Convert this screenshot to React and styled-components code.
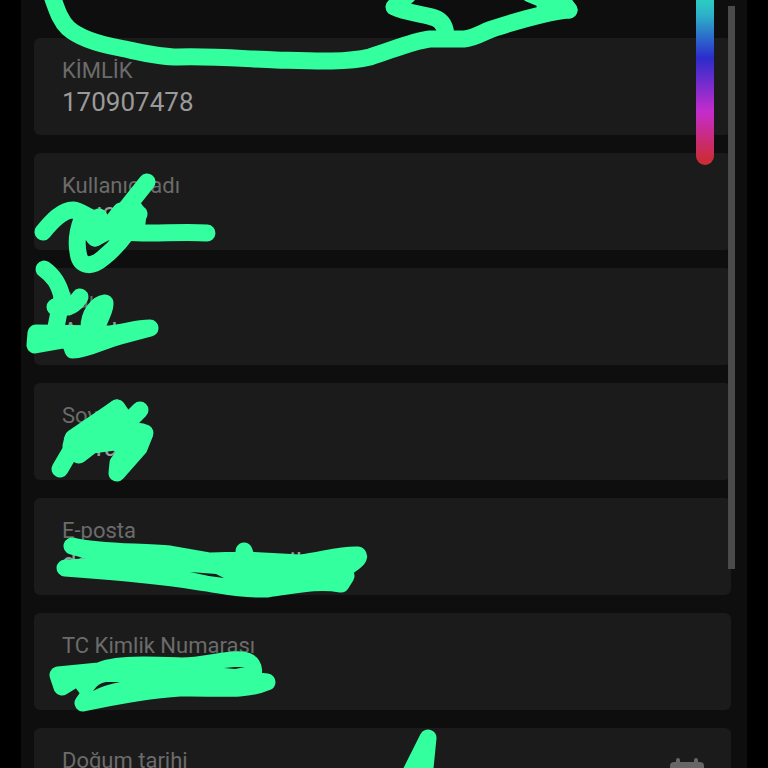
import React from "react";
import styled, { createGlobalStyle } from "styled-components";

const fields = [
  { id: "kimlik", label: "KİMLİK", value: "170907478" },
  { id: "kullanici", label: "Kullanıcı adı", value: "\u00a0\u00a0\u00a0\u00a0d2" },
  { id: "ad", label: "Adı", value: "A\u00a0\u00a0\u00a0\u00a0\u00a0l" },
  { id: "soyad", label: "Soyadı", value: "F\u00a0\u00a0\u00a0ra" },
  {
    id: "eposta",
    label: "E-posta",
    value: "day" + "\u00a0".repeat(16) + "t@" + "\u00a0".repeat(8) + "il",
  },
  { id: "tc", label: "TC Kimlik Numarası", value: "6" },
  { id: "dogum", label: "Doğum tarihi", value: "", date: true },
];

const App = () => {
  return (
    <>
      <GlobalStyle />
      <Screen>
        <Form>
          {fields.map((field) => (
            <Card key={field.id}>
              <CardText>
                <Label htmlFor={field.id}>{field.label}</Label>
                <Value id={field.id} defaultValue={field.value} readOnly />
              </CardText>
              {field.date && (
                <DateButton type="button" aria-label="Doğum tarihi">
                  <CalendarIcon />
                </DateButton>
              )}
            </Card>
          ))}
        </Form>
        <ScrollThumb />
        <Ink />
        <HueBar />
      </Screen>
    </>
  );
};

const CalendarIcon = () => (
  <svg width="34" height="38" viewBox="0 0 34 38" fill="currentColor">
    <path d="M6 4V2a2 2 0 0 1 4 0v2h14V2a2 2 0 0 1 4 0v2h2a4 4 0 0 1 4 4v26a4 4 0 0 1-4 4H4a4 4 0 0 1-4-4V8a4 4 0 0 1 4-4zM4 15v19h26V15z" />
  </svg>
);

const Ink = () => (
  <InkLayer width="768" height="768" viewBox="0 0 768 768">
    {/* top line */}
    <path d="M52 -4C57 10 60 20 68 28C78 37 98 44 120 48C140 52 158 57 178 57C215 56 245 59 276 60C310 61 345 63 370 57C390 51 412 41 430 39L464 39C476 38 484 31 495 28C520 20 546 12 569 10" />
    <path d="M408 -5L394 7C406 13 424 14 435 18C443 21 446 29 446 38" />
    <path d="M530 -6L569 10L558 -5L545 6" />

    {/* user name */}
    <path d="M43 232C52 221 62 210 73 210C84 211 90 222 99 217L95 238L82 219C77 232 76 246 79 257C82 267 93 267 103 258C116 248 127 235 139 214L124 211L147 182" />
    <path d="M99 218L110 231L126 232C150 235 178 231 207 233" />
    <path className="solid" d="M121 211L134 208L138 214L137 223L119 235L106 230Z" />
    <path className="solid" d="M83 219L99 219L108 231L95 238Z" />

    {/* first name */}
    <path d="M44 269C54 276 59 284 62 297L56 327" />
    <path d="M55 307H68C75 305 77 301 80 297" />
    <path className="solid" d="M89 328C89 314 97 304 105 303C106 310 99 318 97 328Z" />
    <path className="solid" d="M36 333L105 334C121 334 134 328 150 328L120 336C104 340 87 350 73 350L69 339L35 345Z" />

    {/* last name */}
    <path d="M60 469L77 440M77 440L117 408M117 433L140 410" />
    <path className="solid" d="M73 438L117 408L124 418L114 442L92 445L79 455L71 446Z" />
    <path className="solid" d="M109 437C123 435 136 428 145 433L139 448L117 473L118 463L128 450L118 443Z" />

    {/* e-mail */}
    <path className="solid" d="M72 546C100 553 139 551 170 554L210 561L245 560L244 551L247 560L300 563C321 561 340 554 358 555Q361 558 350 565L344 570L346 576L341 584C316 580 297 585 267 589C240 590 223 585 200 582C156 575 110 571 65 568C97 567 127 561 158 564L94 552Z" />
    <path className="gap" d="M190 572L216 574L224 578Q206 576 190 572Z" />

    {/* id number */}
    <path className="solid" d="M58 675L99 671C114 663 155 665 181 666C205 666 228 658 242 660C252 661 255 668 253 674L249 680L267 682C244 692 212 687 180 688C146 690 116 696 83 703L90 693L78 677L62 687Z" />
    <path className="gap" d="M93 691Q98 683 106 682L120 682Q104 685 93 691Z" />
    <path className="gap" d="M224 668L235 667L245 667L235 669Z" />

    {/* birth date */}
    <path className="solid" d="M428 738L424 778H408Z" />
  </InkLayer>
);

export default App;

const GlobalStyle = createGlobalStyle`
  * {
    box-sizing: border-box;
  }

  body {
    margin: 0;
    background: #000;
    font-family: Roboto, "Liberation Sans", sans-serif;
  }
`;

const Screen = styled.main`
  position: relative;
  height: 100vh;
  padding: 0 21px;
  overflow: hidden;
`;

const Form = styled.form`
  display: flex;
  flex-direction: column;
  gap: 18px;
  min-height: 100vh;
  padding: 38px 16px 18px 13px;
  background: #0e0e0e;
`;

const Card = styled.div`
  display: flex;
  align-items: center;
  gap: 16px;
  padding: 18px 27px 17px 28px;
  border-radius: 6px;
  background: #1b1b1b;
`;

const CardText = styled.div`
  display: flex;
  flex: 1;
  flex-direction: column;
  min-width: 0;
`;

const Label = styled.label`
  color: #6b6b6b;
  font-size: 22px;
  line-height: 30px;
`;

const Value = styled.input`
  width: 100%;
  height: 32px;
  padding: 0;
  border: 0;
  outline: 0;
  background: transparent;
  color: #9a9a9a;
  font-family: inherit;
  font-size: 26px;
  line-height: 32px;
`;

const DateButton = styled.button`
  display: flex;
  padding: 0;
  border: 0;
  background: transparent;
  color: #666;
`;

const ScrollThumb = styled.div`
  position: absolute;
  top: 6px;
  right: 33px;
  width: 7px;
  height: 563px;
  background: #4a4a4a;
`;

const HueBar = styled.div`
  position: absolute;
  top: 0;
  right: 54px;
  width: 18px;
  height: 165px;
  border-radius: 0 0 9px 9px;
  background: linear-gradient(
    #2cccc0 0,
    #2cb4c8 14px,
    #2c2ccc 58px,
    #c62ccc 112px,
    #cc2c38 160px
  );
`;

const InkLayer = styled.svg`
  position: absolute;
  top: 0;
  left: 0;
  pointer-events: none;

  path {
    fill: none;
    stroke: #34ff9e;
    stroke-width: 17px;
    stroke-linecap: round;
    stroke-linejoin: round;
  }

  .solid {
    fill: #34ff9e;
  }

  .gap {
    fill: #1b1b1b;
    stroke: none;
  }
`;
